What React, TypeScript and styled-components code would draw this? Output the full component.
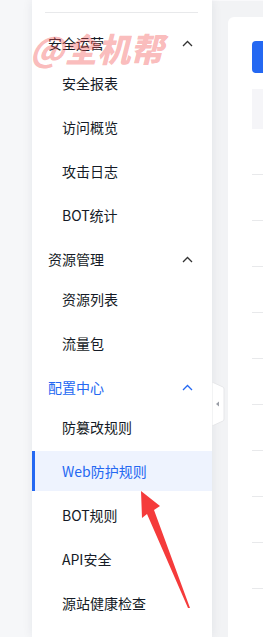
import React from 'react';
import styled, { createGlobalStyle } from 'styled-components';

const GlobalStyle = createGlobalStyle`
  html, body {
    margin: 0;
    padding: 0;
    background: #f6f7f9;
    font-family: "Noto Sans CJK SC", "Noto Sans", sans-serif;
  }
  * { box-sizing: border-box; }
`;

const Page = styled.div`
  display: flex;
  width: 263px;
  height: 637px;
  overflow: hidden;
  position: relative;
`;

const Gutter = styled.div`
  width: 32px;
  flex-shrink: 0;
  background: #f6f7f9;
`;

const Sidebar = styled.aside`
  position: relative;
  width: 180px;
  flex-shrink: 0;
  background: #fff;
  padding-top: 12px;
  box-shadow: 0 0 10px rgba(30, 40, 60, 0.08);
  z-index: 2;
`;

const Divider = styled.div`
  height: 1px;
  margin: 0 14px 10px 13px;
  background: #e8e9eb;
`;

const Group = styled.div`
  margin-bottom: 4px;
`;

const GroupTitle = styled.div<{ $active?: boolean }>`
  display: flex;
  align-items: center;
  justify-content: space-between;
  height: 40px;
  padding: 0 19px 0 16px;
  font-size: 14px;
  color: ${(p) => (p.$active ? '#2468f2' : '#151b26')};
`;

const Item = styled.div<{ $selected?: boolean }>`
  position: relative;
  display: flex;
  align-items: center;
  height: 40px;
  padding-left: 30px;
  font-size: 14px;
  color: ${(p) => (p.$selected ? '#2468f2' : '#151b26')};
  background: ${(p) => (p.$selected ? '#eef3fe' : 'transparent')};
  & + & {
    margin-top: 4px;
  }
  &::before {
    content: '';
    display: ${(p) => (p.$selected ? 'block' : 'none')};
    position: absolute;
    left: 0;
    top: 0;
    bottom: 0;
    width: 3px;
    background: #2468f2;
  }
`;

const CollapseTab = styled.div`
  position: absolute;
  right: -13px;
  top: 382px;
  width: 13px;
  height: 44px;
`;

const Main = styled.main`
  flex: 1;
  display: flex;
  flex-direction: column;
  background: #f2f3f5;
`;

const TopStrip = styled.div`
  height: 14px;
  background: #f9f9fb;
`;

const Content = styled.div`
  padding: 16px 0 0 16px;
`;

const Card = styled.section`
  background: #fff;
  border-radius: 6px 0 0 0;
  padding: 24px 0 0 24px;
  height: 620px;
`;

const PrimaryButton = styled.div`
  width: 90px;
  height: 32px;
  border-radius: 4px;
  background: #2468f2;
`;

const TableHead = styled.div`
  margin-top: 16px;
  height: 40px;
  background: #f5f5f8;
`;

const Row = styled.div`
  height: 46px;
  border-bottom: 1px solid #e8e9eb;
`;

const Watermark = styled.div`
  position: absolute;
  left: 30px;
  top: 24px;
  font-size: 33px;
  font-weight: 900;
  font-style: italic;
  color: rgba(242, 80, 80, 0.4);
  pointer-events: none;
  z-index: 5;
  font-family: "Noto Sans CJK SC", sans-serif;
`;

const ArrowLayer = styled.svg`
  position: absolute;
  left: 0;
  top: 0;
  pointer-events: none;
  z-index: 6;
`;

const Chevron = ({ color }: { color: string }) => (
  <svg width="11" height="7" viewBox="0 0 11 7">
    <path d="M1 6 L5.5 1.5 L10 6" fill="none" stroke={color} strokeWidth="1.3" />
  </svg>
);

const groups = [
  { title: '安全运营', items: ['安全报表', '访问概览', '攻击日志', 'BOT统计'] },
  { title: '资源管理', items: ['资源列表', '流量包'] },
  {
    title: '配置中心',
    active: true,
    items: ['防篡改规则', 'Web防护规则', 'BOT规则', 'API安全', '源站健康检查'],
  },
];

export default function App() {
  return (
    <>
      <GlobalStyle />
      <Page>
        <Gutter />
        <Sidebar>
          <Divider />
          {groups.map((g) => (
            <Group key={g.title}>
              <GroupTitle $active={g.active}>
                {g.title}
                <Chevron color={g.active ? '#2468f2' : '#333'} />
              </GroupTitle>
              {g.items.map((it) => (
                <Item key={it} $selected={it === 'Web防护规则'}>
                  {it}
                </Item>
              ))}
            </Group>
          ))}
          <CollapseTab>
            <svg width="13" height="44" viewBox="0 0 13 44">
              <path d="M0 0 L11 5 Q12 5.5 12 7 L12 37 Q12 38.5 11 39 L0 44 Z" fill="#fff" stroke="#e6e7ea" strokeWidth="1" />
              <path d="M4 22 L7 19.5 L7 24.5 Z" fill="#9a9ea6" />
            </svg>
          </CollapseTab>
        </Sidebar>
        <Main>
          <TopStrip />
          <Content>
            <Card>
              <PrimaryButton />
              <TableHead />
              {Array.from({ length: 10 }).map((_, i) => (
                <Row key={i} />
              ))}
            </Card>
          </Content>
        </Main>
        <Watermark>@全机帮</Watermark>
        <ArrowLayer width="263" height="637" viewBox="0 0 263 637">
          <polygon
            points="141,491 160,506 154,510 190,608 188,608 147,514 142,518"
            fill="#f53b3b"
          />
        </ArrowLayer>
      </Page>
    </>
  );
}
